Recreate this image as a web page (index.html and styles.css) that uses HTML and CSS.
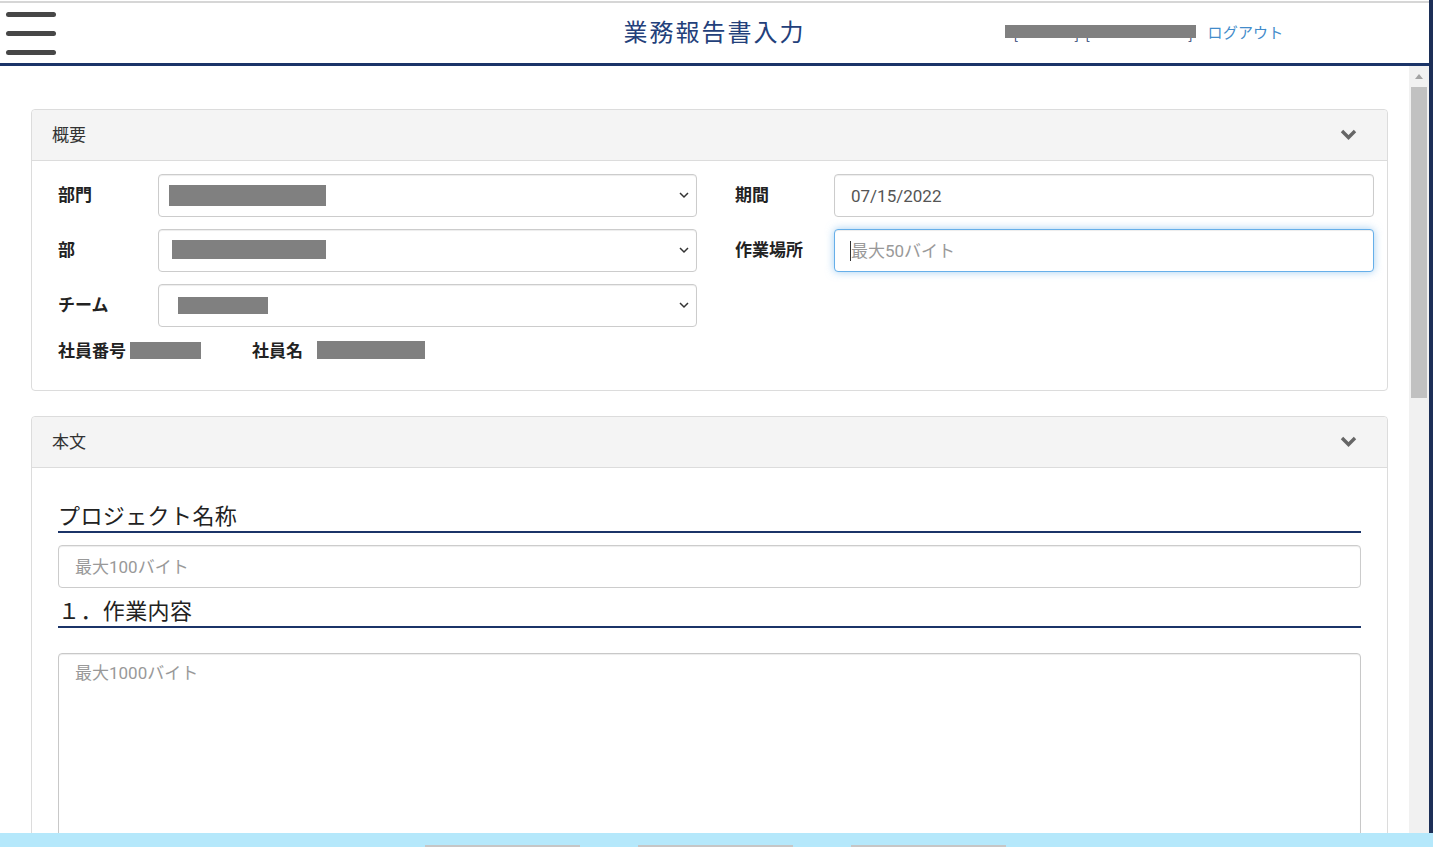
FILE: index.html
```html
<!DOCTYPE html>
<html lang="ja">
<head>
<meta charset="utf-8">
<title>業務報告書入力</title>
<link rel="stylesheet" href="styles.css">
</head>
<body>
<div class="screen">
  <div class="app">
    <header class="topbar">
      <button class="menu" type="button" aria-label="メニュー"><span></span><span></span><span></span></button>
      <h1 class="title">業務報告書入力</h1>
      <div class="user">
        <span class="user-name">[　　　　]&nbsp;&nbsp;[　　　　　　　]</span>
        <a class="logout" href="#">ログアウト</a>
      </div>
    </header>
    <div class="main">
      <div class="content">
        <section class="card">
          <div class="card-head">
            <span>概要</span>
            <svg class="chev" width="17" height="11" viewBox="0 0 17 11"><polyline points="2,2 8.5,8.5 15,2" fill="none" stroke="#666" stroke-width="3.4"/></svg>
          </div>
          <div class="card-body summary">
            <div class="form-grid">
              <div class="col">
                <div class="field">
                  <span class="label">部門</span>
                  <div class="control select"><span class="redact r1"></span><svg class="caret" width="10" height="7" viewBox="0 0 10 7"><polyline points="1,1 5,5 9,1" fill="none" stroke="#333" stroke-width="1.5"/></svg></div>
                </div>
                <div class="field">
                  <span class="label">部</span>
                  <div class="control select"><span class="redact r2"></span><svg class="caret" width="10" height="7" viewBox="0 0 10 7"><polyline points="1,1 5,5 9,1" fill="none" stroke="#333" stroke-width="1.5"/></svg></div>
                </div>
                <div class="field">
                  <span class="label">チーム</span>
                  <div class="control select"><span class="redact r3"></span><svg class="caret" width="10" height="7" viewBox="0 0 10 7"><polyline points="1,1 5,5 9,1" fill="none" stroke="#333" stroke-width="1.5"/></svg></div>
                </div>
              </div>
              <div class="col col-right">
                <div class="field">
                  <span class="label">期間</span>
                  <input class="control input" type="text" value="07/15/2022">
                </div>
                <div class="field">
                  <span class="label">作業場所</span>
                  <div class="focus-wrap"><input class="control input is-focus" type="text" placeholder="最大50バイト"><span class="text-caret"></span></div>
                </div>
              </div>
            </div>
            <div class="info">
              <span class="label">社員番号</span><span class="redact r4"></span>
              <span class="label info-name">社員名</span><span class="redact r5"></span>
            </div>
          </div>
        </section>

        <section class="card">
          <div class="card-head">
            <span>本文</span>
            <svg class="chev" width="17" height="11" viewBox="0 0 17 11"><polyline points="2,2 8.5,8.5 15,2" fill="none" stroke="#666" stroke-width="3.4"/></svg>
          </div>
          <div class="card-body body-text">
            <h2 class="sec-title">プロジェクト名称</h2>
            <input class="control input wide" type="text" placeholder="最大100バイト">
            <h2 class="sec-title second">１．作業内容</h2>
            <textarea class="area" placeholder="最大1000バイト"></textarea>
          </div>
        </section>
      </div>
      <div class="scrollbar">
        <div class="sb-up"><span></span></div>
        <div class="sb-thumb"></div>
      </div>
    </div>
  </div>
  <div class="taskbar"><span></span><span></span><span></span></div>
</div>
</body>
</html>
```

FILE: styles.css
```css
* { box-sizing: border-box; }
html, body { margin: 0; height: 100%; }
body {
  font-family: "Noto Sans CJK JP", "Noto Sans", sans-serif;
  color: #333;
  background: #fff;
  overflow: hidden;
}
.screen {
  height: 847px;
  display: flex;
  flex-direction: column;
}
.app {
  flex: 1;
  min-height: 0;
  display: flex;
  flex-direction: column;
  padding-top: 1px;
  border-right: 4px solid #1c2f57;
}

/* header */
.topbar {
  height: 65px;
  flex: none;
  border-top: 2px solid #d6d6d6;
  border-bottom: 3px solid #1b3468;
  display: grid;
  grid-template-columns: 1fr auto 1fr;
  align-items: center;
}
.menu {
  justify-self: start;
  margin-left: 6px;
  padding: 0;
  border: 0;
  background: none;
  display: flex;
  flex-direction: column;
  gap: 14px;
}
.menu span {
  display: block;
  width: 50px;
  height: 5px;
  border-radius: 3px;
  background: #474747;
}
.title {
  margin: 0 0 4px;
  font-size: 24px;
  font-weight: normal;
  letter-spacing: 2px;
  color: #23407a;
  line-height: 1;
}
.user {
  justify-self: start;
  margin-left: 199px;
  margin-bottom: 3px;
  display: flex;
  align-items: center;
}
.user-name {
  position: relative;
  display: inline-block;
  width: 191px;
  height: 17px;
  white-space: nowrap;
  font-size: 14px;
  line-height: 16px;
  color: #1f3a6e;
  padding-left: 9px;
  margin-top: 3px;
}
.user-name::after {
  content: "";
  position: absolute;
  left: 0;
  top: 0;
  width: 191px;
  height: 13px;
  background: #808080;
}
.logout {
  margin-left: 12px;
  font-size: 15px;
  color: #428bca;
  text-decoration: none;
  letter-spacing: 0.2px;
}

/* main */
.main {
  flex: 1;
  min-height: 0;
  display: flex;
}
.content {
  flex: 1;
  overflow: hidden;
  padding: 43px 21px 0 31px;
}
.scrollbar {
  width: 20px;
  flex: none;
  background: #f1f1f1;
  display: flex;
  flex-direction: column;
}
.sb-up {
  height: 21px;
  display: flex;
  align-items: center;
  justify-content: center;
}
.sb-up span {
  width: 0;
  height: 0;
  border-left: 4.5px solid transparent;
  border-right: 4.5px solid transparent;
  border-bottom: 5px solid #a3a3a3;
}
.sb-thumb {
  margin-left: 2px;
  width: 16px;
  height: 311px;
  background: #c1c1c1;
}

/* cards */
.card {
  border: 1px solid #dcdcdc;
  border-radius: 4px;
  background: #fff;
}
.card + .card { margin-top: 25px; }
.card-head {
  height: 51px;
  background: #f4f4f4;
  border-bottom: 1px solid #dcdcdc;
  border-radius: 4px 4px 0 0;
  display: flex;
  align-items: center;
  justify-content: space-between;
  padding: 0 30px 3px 20px;
  font-size: 17px;
  color: #333;
}
.chev { display: block; margin-top: 2px; }

.summary { padding: 13px 13px 30px 26px; }
.form-grid {
  display: grid;
  grid-template-columns: 1fr 1fr;
  column-gap: 38px;
}
.col {
  display: flex;
  flex-direction: column;
  gap: 12px;
}
.field {
  display: grid;
  grid-template-columns: 100px 1fr;
  align-items: center;
}
.col-right .field { grid-template-columns: 99px 1fr; }
.field .label { margin-bottom: 4px; }
.label {
  font-size: 17px;
  font-weight: bold;
  color: #222;
}
.control {
  width: 100%;
  height: 43px;
  border: 1px solid #ccc;
  border-radius: 4px;
  background: #fff;
  box-shadow: inset 0 1px 1px rgba(0, 0, 0, 0.075);
}
.select {
  display: flex;
  align-items: center;
  justify-content: space-between;
  padding: 0 7px 0 0;
}
.caret { display: block; }
.redact {
  display: inline-block;
  background: #808080;
}
.r1 { width: 157px; height: 21px; margin-left: 10px; }
.r2 { width: 154px; height: 19px; margin-left: 13px; margin-top: -3px; }
.r3 { width: 90px; height: 17px; margin-left: 19px; }
.input {
  padding: 0 16px;
  font-family: Roboto, "Noto Sans CJK JP", sans-serif;
  font-size: 17px;
  color: #555;
  outline: none;
}
.input::placeholder,
.area::placeholder {
  color: #999;
  font-family: Roboto, "Noto Sans CJK JP", sans-serif;
}
.focus-wrap {
  position: relative;
}
.is-focus {
  border-color: #66afe9;
  box-shadow: inset 0 1px 1px rgba(0, 0, 0, 0.075), 0 0 8px rgba(102, 175, 233, 0.6);
}
.text-caret {
  position: absolute;
  left: 16px;
  top: 12px;
  width: 1px;
  height: 20px;
  background: #333;
}

.info {
  margin-top: 13px;
  height: 20px;
  display: flex;
  align-items: center;
}
.info .label { margin-bottom: 2px; }
.r4 { width: 71px; height: 17px; margin-left: 4px; }
.info-name { margin-left: 51px; }
.r5 { width: 108px; height: 18px; margin-left: 14px; }

/* body section */
.body-text { padding: 33px 26px 0 26px; }
.sec-title {
  margin: 0;
  font-size: 22px;
  font-weight: normal;
  letter-spacing: 0.4px;
  line-height: 27px;
  padding-bottom: 3px;
  color: #222;
  border-bottom: 2px solid #1b3468;
}
.wide { display: block; margin-top: 12px; }
.second { margin-top: 8px; }
.area {
  display: block;
  width: 100%;
  height: 260px;
  margin-top: 25px;
  padding: 7px 16px;
  border: 1px solid #c8c8c8;
  border-radius: 4px;
  resize: none;
  font-family: Roboto, "Noto Sans CJK JP", sans-serif;
  font-size: 17px;
  line-height: 24px;
  color: #555;
  box-shadow: inset 0 1px 1px rgba(0, 0, 0, 0.075);
  outline: none;
}

/* taskbar */
.taskbar {
  height: 14px;
  flex: none;
  background: #b5e8fb;
  display: flex;
  align-items: flex-end;
  gap: 58px;
  padding-left: 425px;
}
.taskbar span {
  width: 155px;
  height: 2px;
  background: #c6c6c6;
}
```
